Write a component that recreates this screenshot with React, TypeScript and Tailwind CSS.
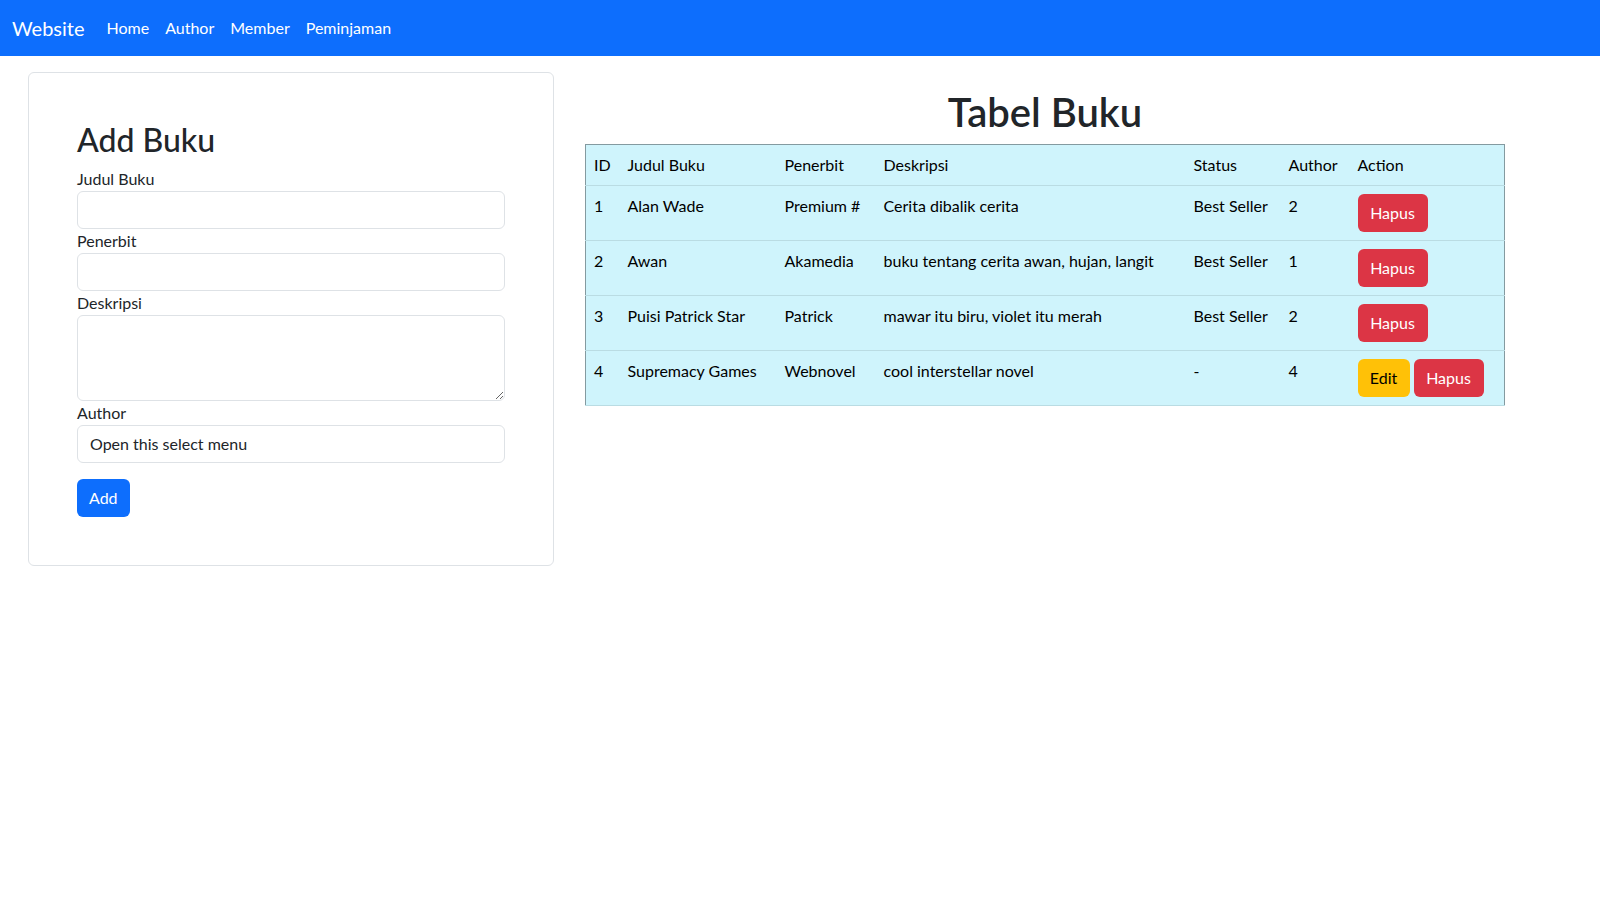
import { useState } from "react";

type Buku = {
  id: number;
  judul: string;
  penerbit: string;
  deskripsi: string;
  status: string;
  author: number;
  editable?: boolean;
};

const books: Buku[] = [
  { id: 1, judul: "Alan Wade", penerbit: "Premium #", deskripsi: "Cerita dibalik cerita", status: "Best Seller", author: 2 },
  { id: 2, judul: "Awan", penerbit: "Akamedia", deskripsi: "buku tentang cerita awan, hujan, langit", status: "Best Seller", author: 1 },
  { id: 3, judul: "Puisi Patrick Star", penerbit: "Patrick", deskripsi: "mawar itu biru, violet itu merah", status: "Best Seller", author: 2 },
  { id: 4, judul: "Supremacy Games", penerbit: "Webnovel", deskripsi: "cool interstellar novel", status: "-", author: 4, editable: true },
];

const inputCls =
  "block w-full h-[38px] rounded-[6px] border border-[#dee2e6] bg-white px-3 text-base text-[#212529] outline-none";

function Navbar() {
  return (
    <nav className="flex h-14 items-center bg-[#0d6efd] px-3">
      <a className="mr-[14px] text-[20px] leading-[30px] text-white">Website</a>
      <ul className="flex">
        {["Home", "Author", "Member", "Peminjaman"].map((l) => (
          <li key={l}>
            <a className="block px-2 py-2 text-base leading-6 text-white">{l}</a>
          </li>
        ))}
      </ul>
    </nav>
  );
}

function AddForm() {
  const [judul, setJudul] = useState("");
  const [penerbit, setPenerbit] = useState("");
  const [deskripsi, setDeskripsi] = useState("");

  return (
    <div className="w-[526px] shrink-0 rounded-[6px] border border-[#dee2e6] bg-white p-12">
      <h2 className="mb-2 text-[32px] font-medium leading-[38.4px]">Add Buku</h2>
      <label className="block leading-6">Judul Buku</label>
      <input className={inputCls} value={judul} onChange={(e) => setJudul(e.target.value)} />
      <label className="block leading-6">Penerbit</label>
      <input className={inputCls} value={penerbit} onChange={(e) => setPenerbit(e.target.value)} />
      <label className="block leading-6">Deskripsi</label>
      <textarea
        rows={3}
        className="block h-[86px] w-full rounded-[6px] border border-[#dee2e6] bg-white px-3 py-1.5 leading-6 outline-none"
        value={deskripsi}
        onChange={(e) => setDeskripsi(e.target.value)}
      />
      <label className="block leading-6">Author</label>
      <select className={`${inputCls} appearance-none`}>
        <option>Open this select menu</option>
        <option value="1">1</option>
        <option value="2">2</option>
        <option value="4">4</option>
      </select>
      <button className="mt-4 h-[38px] rounded-[6px] bg-[#0d6efd] px-3 text-base text-white">Add</button>
    </div>
  );
}

function BookTable() {
  return (
    <div className="ml-[31px] mt-4 w-[920px]">
      <h1 className="mb-2 text-center text-[40px] font-semibold leading-[48px]">Tabel Buku</h1>
      <table className="w-full table-fixed border-collapse border-x border-t border-x-[#849aa0] border-t-[#849aa0] bg-[#cff4fc] text-black">
        <colgroup>
          <col className="w-[34px]" />
          <col className="w-[157px]" />
          <col className="w-[99px]" />
          <col className="w-[310px]" />
          <col className="w-[95px]" />
          <col className="w-[69px]" />
          <col />
        </colgroup>
        <thead>
          <tr className="border-b border-[#badce3]">
            {["ID", "Judul Buku", "Penerbit", "Deskripsi", "Status", "Author", "Action"].map((h) => (
              <th key={h} className="p-2 text-left align-top font-normal leading-6">
                {h}
              </th>
            ))}
          </tr>
        </thead>
        <tbody>
          {books.map((b) => (
            <tr key={b.id} className="border-b border-[#badce3]">
              <td className="p-2 align-top leading-6">{b.id}</td>
              <td className="p-2 align-top leading-6">{b.judul}</td>
              <td className="p-2 align-top leading-6">{b.penerbit}</td>
              <td className="p-2 align-top leading-6">{b.deskripsi}</td>
              <td className="p-2 align-top leading-6">{b.status}</td>
              <td className="p-2 align-top leading-6">{b.author}</td>
              <td className="p-2 align-top">
                <div className="flex gap-1">
                  {b.editable && (
                    <button className="h-[38px] w-[52px] rounded-[6px] bg-[#ffc107] text-black">Edit</button>
                  )}
                  <button className="h-[38px] w-[70px] rounded-[6px] bg-[#dc3545] text-white">Hapus</button>
                </div>
              </td>
            </tr>
          ))}
        </tbody>
      </table>
    </div>
  );
}

export default function App() {
  return (
    <div className="min-h-screen bg-white font-['Lato','Liberation_Sans',sans-serif] text-base text-[#212529]">
      <Navbar />
      <div className="flex items-start pl-[28px] pt-4">
        <AddForm />
        <BookTable />
      </div>
    </div>
  );
}
